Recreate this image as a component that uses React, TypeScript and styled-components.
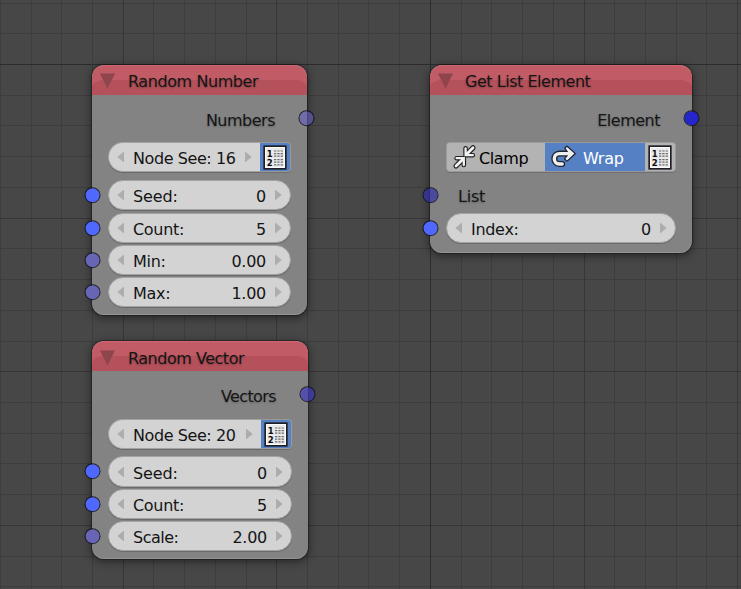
import React from "react";
import styled, { createGlobalStyle } from "styled-components";

const GlobalStyle = createGlobalStyle`
  html, body { margin: 0; padding: 0; overflow: hidden; background: #474747; }
  * { box-sizing: border-box; }
`;

const Canvas = styled.main`
  position: relative;
  width: 741px;
  height: 589px;
  overflow: hidden;
  background: #474747;
  font-family: "DejaVu Sans", sans-serif;
  font-size: 16px;
  color: #151515;
  white-space: pre;
`;

const GridSvg = styled.svg`
  display: block;
`;

const NodeBox = styled.section<{ $x: number; $y: number; $w: number; $h: number }>`
  position: absolute;
  left: ${(p) => p.$x}px;
  top: ${(p) => p.$y}px;
  width: ${(p) => p.$w}px;
  height: ${(p) => p.$h}px;
  border-radius: 12px;
  background: rgba(133, 133, 133, 0.97);
  box-shadow: 0 0 0 1px rgba(20, 20, 20, 0.5), 0 2px 8px 1px rgba(0, 0, 0, 0.45),
    inset 0 -1px 0 rgba(255, 255, 255, 0.14);
`;

const Header = styled.header<{ $pad: number }>`
  display: flex;
  align-items: center;
  height: 30px;
  padding: ${(p) => p.$pad}px 0 0 8px;
  border-radius: 12px 12px 0 0;
  background:
    radial-gradient(ellipse 12px 8px at 12px 23px, #b4515b 98%, transparent) 0 0 / 12px 23px no-repeat,
    radial-gradient(ellipse 12px 8px at 0 23px, #b4515b 98%, transparent) 100% 0 / 12px 23px no-repeat,
    linear-gradient(#b4515b, #b4515b) 50% 15px / calc(100% - 24px) 15px no-repeat,
    linear-gradient(#b4515b, #b4515b) 0 23px / 100% 7px no-repeat,
    #c15b65;
  box-shadow: inset 0 1px 0 rgba(255, 150, 160, 0.2);
`;

const Fold = styled.svg`
  width: 15px;
  height: 16px;
`;

const Label = styled.span<{ $ls?: number; $gap?: number }>`
  letter-spacing: ${(p) => p.$ls ?? 0}px;
  margin-left: ${(p) => p.$gap ?? 0}px;
  text-shadow: 0 1px 2px rgba(0, 0, 0, 0.25);
`;

const Row = styled.div<{ $h: number; $gap: number }>`
  position: relative;
  display: flex;
  height: ${(p) => p.$h}px;
  margin: ${(p) => p.$gap}px 16px 0;
`;

const SocketLabel = styled.div<{ $right?: boolean }>`
  flex: 1;
  display: flex;
  justify-content: ${(p) => (p.$right ? "flex-end" : "flex-start")};
  padding: 0 16px 0 12px;
  line-height: 34px;
`;

const Socket = styled.i<{ $color: string; $right?: boolean }>`
  position: absolute;
  top: ${(p) => (p.$right ? 6 : 7)}px;
  ${(p) => (p.$right ? "right: -24px;" : "left: -24px;")}
  transform: translate(${(p) => (p.$right ? -0.5 : 0.5)}px, 0.2px);
  width: 16px;
  height: 16px;
  border-radius: 50%;
  border: 1px solid rgba(15, 15, 35, 0.85);
  background: ${(p) => p.$color};
  background-clip: padding-box;
`;

const Field = styled.div<{ $joined?: boolean }>`
  flex: 1;
  display: flex;
  align-items: center;
  border: 1px solid #a3a3a3;
  border-right-width: ${(p) => (p.$joined ? 0 : 1)}px;
  border-radius: ${(p) => (p.$joined ? "15px 0 0 15px" : "15px")};
  background: #d3d3d3;
  box-shadow: 0 1px 0 rgba(75, 75, 75, 0.45);
  padding: 0 8px;
`;

const FieldText = styled.span<{ $ls?: number; $value?: boolean }>`
  padding-top: 3px;
  margin-left: ${(p) => (p.$value ? "auto" : "9px")};
  margin-right: ${(p) => (p.$value ? "9px" : "auto")};
  letter-spacing: ${(p) => p.$ls ?? 0}px;
`;

const Arrow = styled.svg`
  width: 7px;
  height: 12px;
  flex: none;
  fill: #adadad;
`;

const IconButton = styled.div<{ $active?: boolean }>`
  width: 31px;
  flex: none;
  display: flex;
  align-items: center;
  justify-content: center;
  border: 1px solid #9a9a9a;
  border-left-width: 0;
  border-radius: 0 4px 4px 0;
  background: ${(p) => (p.$active ? "#5680c4" : "#b3b3b3")};
  box-shadow: 0 1px 0 rgba(75, 75, 75, 0.35);
`;

const ModeButton = styled.div<{ $active?: boolean; $w: number }>`
  width: ${(p) => p.$w}px;
  display: flex;
  align-items: center;
  border: 1px solid #9a9a9a;
  border-right-width: 0;
  border-left-width: ${(p) => (p.$active ? 0 : 1)}px;
  border-radius: ${(p) => (p.$active ? "0" : "4px 0 0 4px")};
  background: ${(p) => (p.$active ? "#5680c4" : "#b3b3b3")};
  color: ${(p) => (p.$active ? "#fff" : "#000")};
  box-shadow: 0 1px 0 rgba(75, 75, 75, 0.35);
  padding-left: 5px;
`;

const ModeIcon = styled.svg`
  width: 26px;
  height: 26px;
  flex: none;
`;

const ModeText = styled.span<{ $gap: number; $ls?: number }>`
  padding-top: 3px;
  margin-left: ${(p) => p.$gap}px;
  letter-spacing: ${(p) => p.$ls ?? 0}px;
`;

const STEP = 30.72;

function Grid() {
  const cols = Array.from({ length: 25 }, (_, i) => i);
  const rows = Array.from({ length: 20 }, (_, i) => i);
  const tone = (i: number, axis: number) => (i === axis ? 2 : (i - axis) % 5 === 0 ? 1 : 0);
  const tones = ["#3d3d3d", "#363636", "#2c2c2c"];
  return (
    <GridSvg width="741" height="589" shapeRendering="crispEdges">
      {tones.map((fill, level) => (
        <g key={fill} fill={fill}>
          {cols.filter((i) => tone(i, 14) === level).map((i) => (
            <rect key={"c" + i} x={Math.floor(0.35 + i * STEP)} y="0" width="1" height="589" />
          ))}
          {rows.filter((i) => tone(i, 2) === level).map((i) => (
            <rect key={"r" + i} x="0" y={Math.floor(3.1 + i * STEP)} width="741" height="1" />
          ))}
        </g>
      ))}
    </GridSvg>
  );
}

function ListIcon() {
  return (
    <svg width="24" height="25" viewBox="0 0 24 25">
      <rect x="1.2" y="1.2" width="21.6" height="22.6" fill="#e9e9e9" stroke="#1d1d24" strokeWidth="1.7" />
      <rect x="2.6" y="2.6" width="18.8" height="19.8" fill="none" stroke="#fff" />
      <g fontFamily="DejaVu Sans" fontWeight="700" fontSize="8.5" fill="#0c0c0c">
        <text x="3.8" y="11.8">1</text>
        <text x="3.8" y="20.6">2</text>
      </g>
      <g stroke="#6c6c6c" strokeWidth="1.2" strokeDasharray="2.3 1">
        <path d="M11 6H20.5M11 8.6H20.5M11 11.2H20.5M11 14.6H20.5M11 17.2H20.5M11 19.8H20.5" />
      </g>
    </svg>
  );
}

function ClampIcon() {
  const corners = "M13.6 4.4V11.2H20.8M11.8 21V14.2H4.6";
  const shafts = "M14.8 10L21 3.8M10.6 15.4L4 22";
  return (
    <ModeIcon viewBox="0 0 26 26" fill="none">
      <g stroke="#222" strokeLinejoin="round" strokeLinecap="round">
        <path d={corners} strokeWidth="4.6" />
        <path d={shafts} strokeWidth="5.2" />
      </g>
      <g stroke="#f3f3f3" strokeLinecap="round">
        <path d={corners} strokeWidth="2.3" />
        <path d={shafts} strokeWidth="2.8" />
      </g>
    </ModeIcon>
  );
}

function WrapIcon() {
  const d = "M18 9.6H9.4C2.6 9.6 2.6 20 9.4 20H12.2";
  const head = "M15.6 4.2L17 2.9L24.4 9.6L17 16.4L15.4 14.8L18 11.4V7.8Z";
  return (
    <ModeIcon viewBox="0 0 26 26" fill="none">
      <g stroke="#20242c" strokeLinejoin="round" strokeLinecap="round">
        <path d={d} strokeWidth="6" />
        <path d={head} strokeWidth="2.6" />
      </g>
      <path d={d} stroke="#efefef" strokeWidth="3.4" strokeLinecap="round" />
      <path d={head} fill="#efefef" />
    </ModeIcon>
  );
}

const Left = () => (
  <Arrow viewBox="0 0 7 12"><path d="M7 0.5V11.5L0.3 6Z" /></Arrow>
);
const Right = () => (
  <Arrow viewBox="0 0 7 12"><path d="M0 0.5V11.5L6.7 6Z" /></Arrow>
);

function Title({ text, ls, pad = 2, gap = 13 }: { text: string; ls?: number; pad?: number; gap?: number }) {
  return (
    <Header $pad={pad}>
      <Fold viewBox="0 0 15 16"><path d="M0 0.5H15L7.5 15.5Z" fill="#8e454e" /></Fold>
      <Label $ls={ls} $gap={gap}>{text}</Label>
    </Header>
  );
}

function Output({ text, color, gap, ls }: { text: string; color: string; gap: number; ls?: number }) {
  return (
    <Row $h={32} $gap={gap}>
      <SocketLabel $right><Label $ls={ls}>{text}</Label></SocketLabel>
      <Socket $right $color={color} />
    </Row>
  );
}

type NumberRow = { name: string; value: string; color: string; gap: number; h?: number; ls?: number };

function NumberField({ name, value, color, gap, h = 30, ls = -0.3 }: NumberRow) {
  return (
    <Row $h={h} $gap={gap}>
      <Socket $color={color} />
      <Field>
        <Left />
        <FieldText $ls={ls}>{name}</FieldText>
        <FieldText $value $ls={-0.25}>{value}</FieldText>
        <Right />
      </Field>
    </Row>
  );
}

function SeedSelector({ text, gap }: { text: string; gap: number }) {
  return (
    <Row $h={30} $gap={gap}>
      <Field $joined>
        <Left />
        <FieldText $ls={-0.42}>{text}</FieldText>
        <Right />
      </Field>
      <IconButton $active><ListIcon /></IconButton>
    </Row>
  );
}

const INT = "#4f68ff";
const FLOAT = "#6865b4";

export default function App() {
  return (
    <>
      <GlobalStyle />
      <Canvas>
        <Grid />
        <NodeBox $x={92} $y={65} $w={215} $h={250}>
          <Title text="Random Number" ls={-0.42} />
          <Output text="Numbers" color="rgba(98, 94, 190, 0.6)" gap={9} ls={-0.5} />
          <SeedSelector text="Node See: 16" gap={6} />
          <NumberField name="Seed:" value="0" color={INT} gap={8} ls={-0.15} />
          <NumberField name="Count:" value="5" color={INT} gap={3} />
          <NumberField name="Min:" value="0.00" color={FLOAT} gap={2} />
          <NumberField name="Max:" value="1.00" color={FLOAT} gap={2} />
        </NodeBox>
        <NodeBox $x={92} $y={341} $w={216} $h={218}>
          <Title text="Random Vector" ls={-0.48} pad={4} />
          <Output text="Vectors" color="rgba(60, 58, 185, 0.68)" gap={9} ls={-0.6} />
          <SeedSelector text="Node See: 20" gap={7} />
          <NumberField name="Seed:" value="0" color={INT} gap={7} h={31} ls={-0.15} />
          <NumberField name="Count:" value="5" color={INT} gap={2} />
          <NumberField name="Scale:" value="2.00" color={FLOAT} gap={2} ls={-0.5} />
        </NodeBox>
        <NodeBox $x={430} $y={65} $w={262} $h={188}>
          <Title text="Get List Element" ls={-0.47} gap={12} />
          <Output text="Element" color="#2525cc" gap={9} ls={-0.5} />
          <Row $h={30} $gap={6}>
            <ModeButton $w={99}><ClampIcon /><ModeText $gap={1} $ls={-0.4}>Clamp</ModeText></ModeButton>
            <ModeButton $w={100} $active><WrapIcon /><ModeText $gap={7} $ls={-0.25}>Wrap</ModeText></ModeButton>
            <IconButton><ListIcon /></IconButton>
          </Row>
          <Row $h={32} $gap={8}>
            <Socket $color="rgba(50, 48, 170, 0.7)" />
            <SocketLabel><Label $ls={-0.2}>List</Label></SocketLabel>
          </Row>
          <NumberField name="Index:" value="0" color={INT} gap={1} />
        </NodeBox>
      </Canvas>
    </>
  );
}
